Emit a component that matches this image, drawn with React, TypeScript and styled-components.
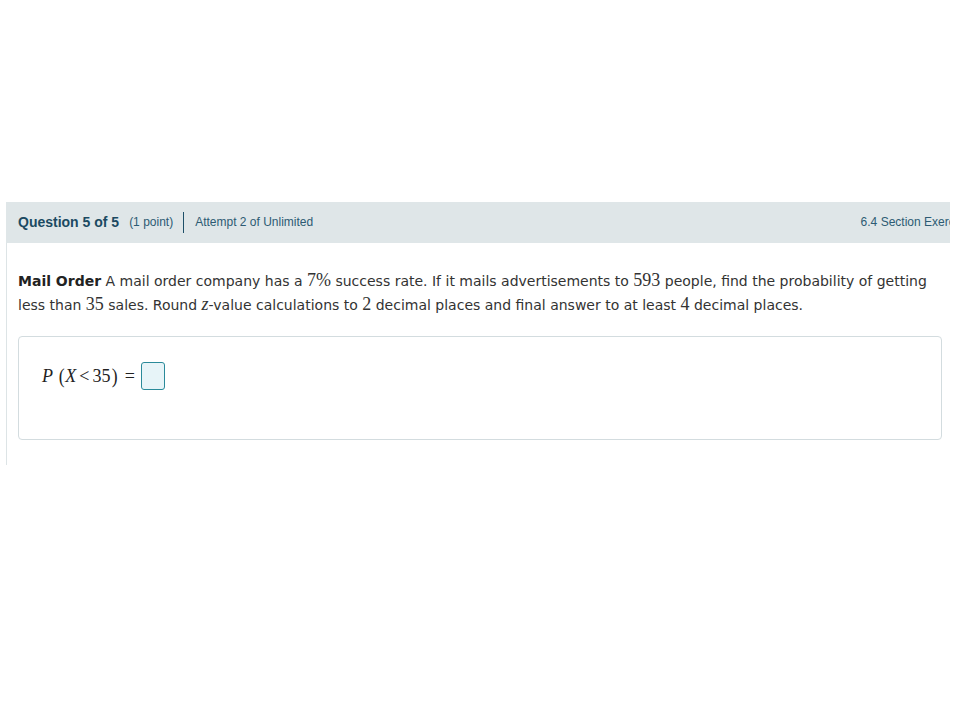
import React from "react";
import styled, { createGlobalStyle } from "styled-components";

const Global = createGlobalStyle`
  html, body { margin: 0; padding: 0; background: #ffffff; }
  body { font-family: "DejaVu Sans", Verdana, sans-serif; }
`;

const Page = styled.div`
  padding: 202px 0 0 6px;
  width: 944px;
`;

const Header = styled.div`
  height: 41px;
  background: #dfe6e8;
  display: flex;
  align-items: center;
  justify-content: space-between;
  padding: 0 0 1px 12px;
  box-sizing: border-box;
  overflow: hidden;
  font-family: "Liberation Sans", Arial, sans-serif;
  color: #1e4f68;
  white-space: nowrap;
`;

const HeaderLeft = styled.div`
  display: flex;
  align-items: center;
`;

const QTitle = styled.span`
  font-weight: bold;
  font-size: 14px;
  color: #1b4a62;
`;

const Points = styled.span`
  font-size: 12px;
  margin-left: 10px;
  color: #2d5b73;
  padding-right: 10px;
`;

const Attempt = styled.span`
  font-size: 12px;
  color: #2d5b73;
  border-left: 1px solid #1e4f68;
  padding-left: 11px;
  line-height: 21px;
`;

const Section = styled.span`
  font-size: 12px;
  color: #2d5b73;
  margin-right: -26px;
`;

const Body = styled.div`
  border-left: 1px solid #dde4e6;
  padding: 26px 8px 25px 11px;
`;

const Prompt = styled.p`
  margin: 0;
  font-size: 14px;
  line-height: 24px;
  color: #333333;
`;

const Strong = styled.b`
  font-weight: bold;
  color: #222222;
`;

const MathNum = styled.span`
  font-family: "Liberation Serif", "Times New Roman", serif;
  font-size: 18px;
  line-height: 1;
`;

const MathIt = styled.i`
  font-family: "Liberation Serif", "Times New Roman", serif;
  font-size: 18px;
  line-height: 1;
`;

const Card = styled.div`
  margin-top: 19px;
  border: 1px solid #d3dcdf;
  border-radius: 4px;
  height: 104px;
  padding: 25px 0 0 23px;
  box-sizing: border-box;
`;

const Equation = styled.div`
  display: flex;
  align-items: center;
  font-family: "Liberation Serif", "Times New Roman", serif;
  font-size: 18px;
  color: #222;
`;

const Var = styled.i`
  font-style: italic;
`;

const Paren = styled.span<{ left?: boolean }>`
  font-size: 22px;
  transform: scaleX(0.8);
  margin: ${(p) => (p.left ? "0 0 0 5px" : "0 1px")};
`;

const Op = styled.span<{ gap?: number }>`
  margin: 0 ${(p) => p.gap ?? 4}px;
`;

const AnswerBox = styled.span`
  display: inline-block;
  width: 24px;
  height: 28px;
  box-sizing: border-box;
  border: 1px solid #2a8a9a;
  border-radius: 3px;
  background: #e7f4f8;
  margin-left: 1px;
`;

export default function App() {
  return (
    <>
      <Global />
      <Page>
        <Header>
          <HeaderLeft>
            <QTitle>Question 5 of 5</QTitle>
            <Points>(1 point)</Points>
            <Attempt>Attempt 2 of Unlimited</Attempt>
          </HeaderLeft>
          <Section>6.4 Section Exercises</Section>
        </Header>
        <Body>
          <Prompt>
            <Strong>Mail Order</Strong> A mail order company has a <MathNum>7%</MathNum> success
            rate. If it mails advertisements to <MathNum>593</MathNum> people, find the probability of
            getting less than <MathNum>35</MathNum> sales. Round <MathIt>z</MathIt>-value calculations
            to <MathNum>2</MathNum> decimal places and final answer to at least <MathNum>4</MathNum>{" "}
            decimal places.
          </Prompt>
          <Card>
            <Equation>
              <Var>P</Var>
              <Paren left>(</Paren>
              <Var>X</Var>
              <Op gap={3}>&lt;</Op>
              <span>35</span>
              <Paren>)</Paren>
              <Op gap={5}>=</Op>
              <AnswerBox />
            </Equation>
          </Card>
        </Body>
      </Page>
    </>
  );
}
